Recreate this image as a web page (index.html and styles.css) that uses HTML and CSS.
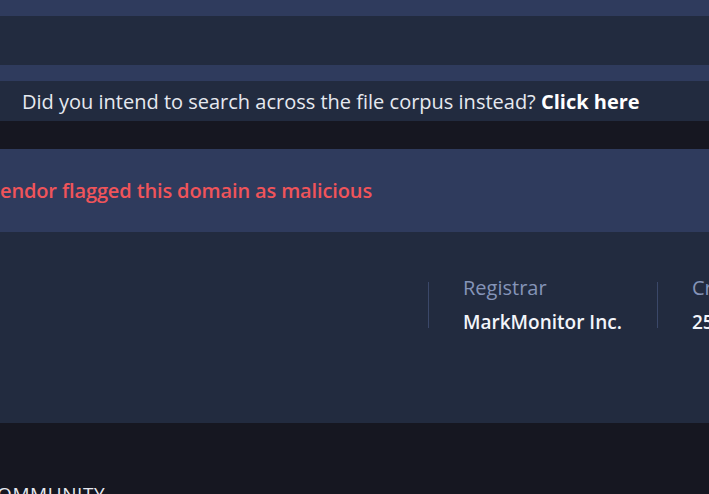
FILE: index.html
```html
<!DOCTYPE html>
<html lang="en">
<head>
<meta charset="utf-8">
<title>Domain report</title>
<link rel="stylesheet" href="styles.css">
</head>
<body>
<div class="page">
  <div class="top-strip"></div>
  <div class="search-band"></div>
  <div class="light-strip"></div>
  <div class="notice">Did you intend to search across the file corpus instead? <b>Click here</b></div>
  <div class="gap"></div>
  <div class="alert">endor flagged this domain as malicious</div>
  <div class="info">
    <div class="facts">
      <div class="fact">
        <div class="fact-label">Registrar</div>
        <div class="fact-value">MarkMonitor Inc.</div>
      </div>
      <div class="fact fact-last">
        <div class="fact-label">Cr</div>
        <div class="fact-value">25</div>
      </div>
    </div>
  </div>
  <div class="footer">
    <div class="footer-heading">OMMUNITY</div>
  </div>
</div>
</body>
</html>
```
FILE: styles.css
```css
html, body {
  margin: 0;
  padding: 0;
  background: #161721;
  overflow: hidden;
}
body {
  font-family: "Open Sans", "Noto Sans", sans-serif;
  color: #eef1f7;
}
.page {
  width: 709px;
  display: flex;
  flex-direction: column;
}
.top-strip {
  height: 16px;
  background: #2f3b5d;
}
.search-band {
  height: 49px;
  background: #222b3f;
}
.light-strip {
  height: 16px;
  background: #2f3b5d;
}
.notice {
  height: 40px;
  background: #222b3f;
  display: flex;
  align-items: center;
  padding-left: 22px;
  font-size: 20px;
  white-space: pre;
  color: #e6e9f0;
}
.notice b {
  color: #ffffff;
  font-weight: 700;
}
.gap {
  height: 28px;
  background: #161721;
}
.alert {
  height: 83px;
  background: #2f3b5d;
  display: flex;
  align-items: center;
  font-size: 20px;
  font-weight: 600;
  letter-spacing: -0.13px;
  color: #f0545a;
  white-space: nowrap;
}
.info {
  height: 191px;
  background: #222b3f;
  display: flex;
  padding-top: 50px;
  box-sizing: border-box;
}
.facts {
  display: flex;
  margin-left: 428px;
  white-space: nowrap;
}
.fact {
  border-left: 1px solid #3b4869;
  padding: 0 0 0 34px;
  width: 194px;
  height: 46px;
  display: flex;
  flex-direction: column;
  justify-content: center;
  gap: 14px;
}
.fact-last {
  width: 16px;
}
.fact-label {
  font-size: 20px;
  color: #8594b8;
  line-height: 20px;
}
.fact-value {
  font-size: 19px;
  font-weight: 600;
  color: #f3f5fa;
  line-height: 20px;
}
.footer {
  height: 71px;
  background: #161721;
  padding-top: 62px;
  box-sizing: border-box;
}
.footer-heading {
  margin-left: -3px;
  font-size: 19px;
  letter-spacing: 0.6px;
  color: #e6e9f0;
  line-height: 19px;
}
```
